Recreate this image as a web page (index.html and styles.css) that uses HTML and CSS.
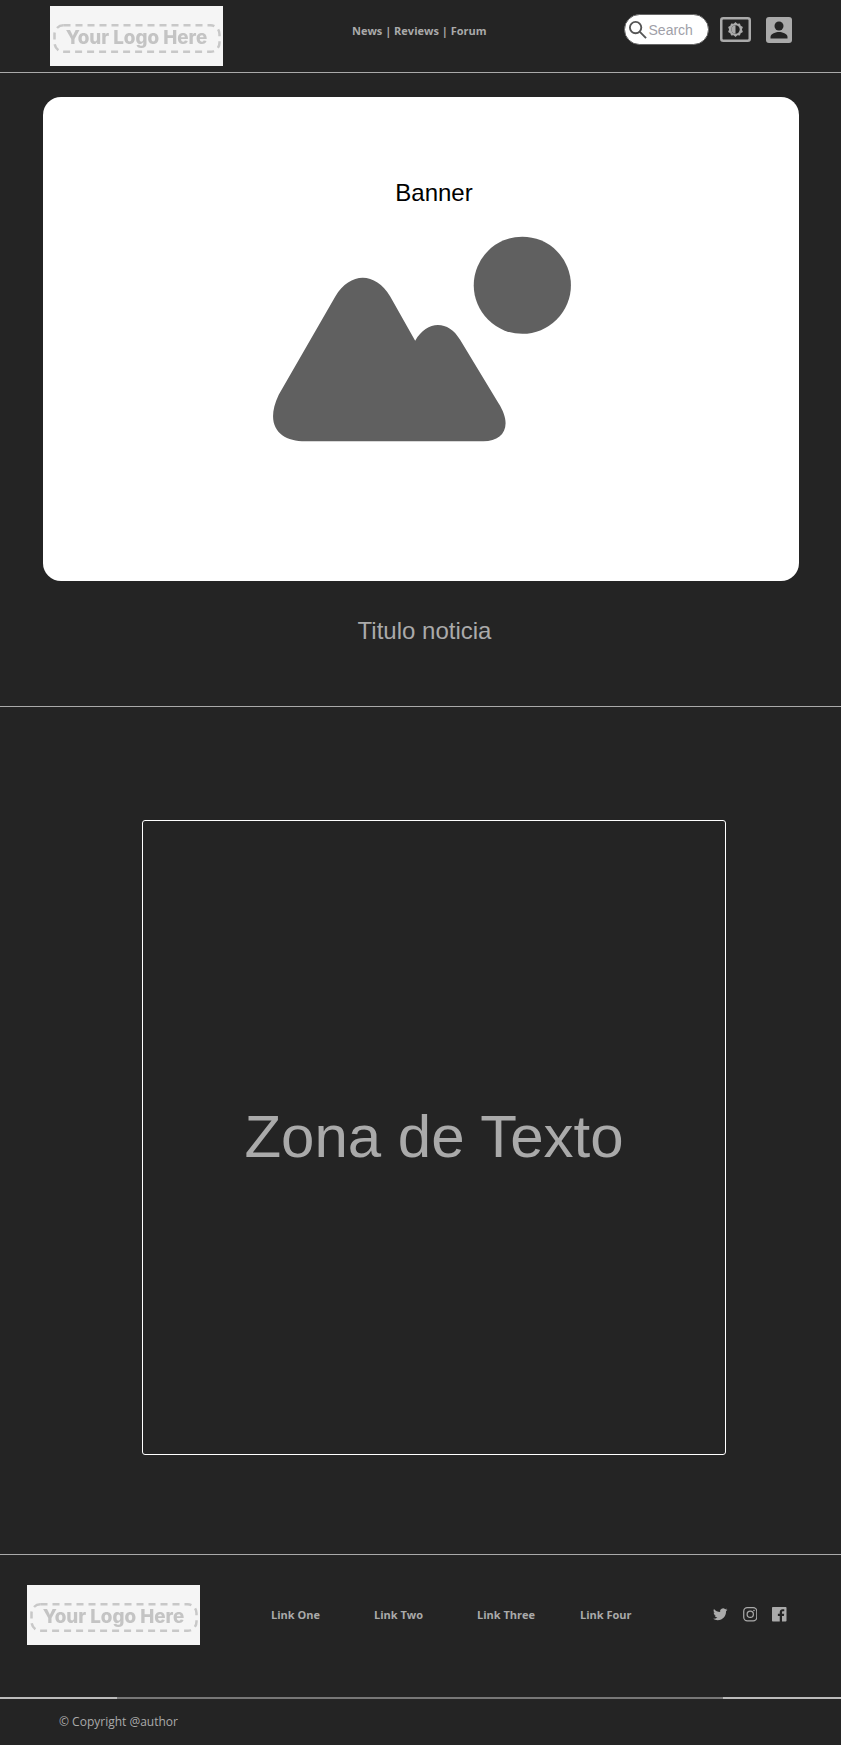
FILE: index.html
```html
<!DOCTYPE html>
<html>
  <head>
    <meta charset="utf-8" />
    <title>noticia</title>
    <link rel="stylesheet" href="styles.css">
  </head>
  <body>
    <header class="topbar">
      <div class="logo">
        <svg class="logo-dash" viewBox="0 0 173 60"><rect x="4.500" y="19.250" width="165" height="26.500" rx="9"/></svg>
        <span class="logo-text">Your Logo Here</span>
      </div>
      <nav class="topnav">
        <a href="#">News</a> | <a href="#">Reviews</a> | <a href="#">Forum</a>
      </nav>
      <div class="tools">
        <div class="search">
          <svg class="search-icon" viewBox="0 0 20 20"><circle cx="8" cy="8" r="6"/><path d="M12.500 12.500 19 19"/></svg>
          <span>Search</span>
        </div>
        <svg class="contrast" viewBox="0 0 31 25">
          <rect x="1.250" y="1.250" width="28.500" height="22.500" rx="2"/>
          <path class="gear" d="M15.500 5l1.900 1.700 2.500-.3.800 2.400 2.200 1.300-1 2.400 1 2.400-2.200 1.300-.8 2.400-2.500-.3-1.900 1.700-1.900-1.700-2.500.3-.8-2.400-2.200-1.300 1-2.400-1-2.400 2.200-1.300.8-2.400 2.500.3z"/>
          <circle class="gear-hole" cx="15.500" cy="12.500" r="4.200"/>
          <path class="gear" d="M15.500 8.300a4.200 4.200 0 0 0 0 8.400z"/>
        </svg>
        <svg class="profile" viewBox="0 0 26 26">
          <rect width="26" height="26" rx="3"/>
          <circle cx="13" cy="9" r="4.500"/>
          <path d="M4.500 21.500v-1.500c0-3.500 5.500-5 8.500-5s8.500 1.500 8.500 5v1.500z"/>
        </svg>
      </div>
    </header>

    <section class="hero">
      <div class="banner">
        <h2>Banner</h2>
        <svg class="picture" viewBox="60 225 905 625">
          <path d="M165 845C90 845 40 800 85 705L255 410C300 335 375 335 420 410L495 543C530 480 595 480 630 540L745 730C790 800 760 845 700 845Z"/>
          <circle cx="817" cy="376" r="146"/>
        </svg>
      </div>
      <h1>Titulo noticia</h1>
    </section>

    <main class="content">
      <div class="textzone">Zona de Texto</div>
    </main>

    <footer>
      <div class="footer-main">
        <div class="logo">
          <svg class="logo-dash" viewBox="0 0 173 60"><rect x="4.500" y="19.250" width="165" height="26.500" rx="9"/></svg>
          <span class="logo-text">Your Logo Here</span>
        </div>
        <div class="footer-links">
          <a href="#">Link One</a>
          <a href="#">Link Two</a>
          <a href="#">Link Three</a>
          <a href="#">Link Four</a>
        </div>
        <div class="social">
          <svg viewBox="0 0 24 24"><path d="M23.953 4.570a10 10 0 01-2.825.775 4.958 4.958 0 002.163-2.723c-.951.555-2.005.959-3.127 1.184a4.920 4.920 0 00-8.384 4.482C7.690 8.095 4.067 6.130 1.640 3.162a4.822 4.822 0 00-.666 2.475c0 1.710.870 3.213 2.188 4.096a4.904 4.904 0 01-2.228-.616v.060a4.923 4.923 0 003.946 4.827 4.996 4.996 0 01-2.212.085 4.936 4.936 0 004.604 3.417 9.867 9.867 0 01-6.102 2.105c-.390 0-.779-.023-1.170-.067a13.995 13.995 0 007.557 2.209c9.053 0 13.998-7.496 13.998-13.985 0-.210 0-.420-.015-.630A9.935 9.935 0 0024 4.590z"/></svg>
          <svg class="insta" viewBox="0 0 24 24"><rect x="1.200" y="1.200" width="21.600" height="21.600" rx="6"/><circle cx="12" cy="12" r="5.200"/><circle class="dot" cx="18.200" cy="5.800" r="1.300"/></svg>
          <svg viewBox="0 0 24 24"><path d="M22.675 0H1.325C.593 0 0 .593 0 1.325v21.351C0 23.407.593 24 1.325 24H12.820v-9.294H9.692v-3.622h3.128V8.413c0-3.100 1.893-4.788 4.659-4.788 1.325 0 2.463.099 2.795.143v3.240l-1.918.001c-1.504 0-1.795.715-1.795 1.763v2.313h3.587l-.467 3.622h-3.120V24h6.116c.730 0 1.323-.593 1.323-1.325V1.325C24 .593 23.407 0 22.675 0z"/></svg>
        </div>
      </div>
      <div class="copyright">© Copyright @author</div>
    </footer>
  </body>
</html>
```

FILE: styles.css
```css
html { font-family: "Liberation Sans", Arial, sans-serif; }

body {
  margin: 0;
  background-color: #242424;
  color: #aaa;
}

a {
  color: #aaa;
  text-decoration: none;
}

.topbar {
  display: flex;
  align-items: flex-start;
  box-sizing: border-box;
  height: 73px;
  padding: 6px 0 0 50px;
  border-bottom: 1px solid #aaa;
}

.logo {
  position: relative;
  display: flex;
  align-items: center;
  justify-content: center;
  flex: none;
  width: 173px;
  height: 60px;
  background-color: #f5f5f5;
}
.logo-dash {
  position: absolute;
  top: 0;
  left: 0;
  width: 173px;
  height: 60px;
  fill: none;
  stroke: #c8c8c8;
  stroke-width: 2.500;
  stroke-dasharray: 7 5;
}
.logo-text {
  margin-top: 3px;
  color: #c4c4c4;
  font-family: Inter, sans-serif;
  font-size: 18.800px;
  font-weight: 800;
  filter: blur(0.4px);
}

.topnav {
  margin: 17px 0 0 129px;
  font-family: "Open Sans", sans-serif;
  font-size: 11px;
  font-weight: bold;
  line-height: 16px;
}

.tools {
  display: flex;
  align-items: center;
  margin: 8px 0 0 137px;
}

.search {
  display: flex;
  align-items: center;
  box-sizing: border-box;
  width: 85px;
  height: 31px;
  padding-left: 3px;
  border: 1px solid #666;
  border-radius: 16px;
  background-color: #fff;
  color: #a0a0a8;
  font-size: 14px;
}
.search-icon {
  width: 19px;
  height: 19px;
  margin-right: 2px;
  fill: none;
  stroke: #555;
  stroke-width: 2;
}

.contrast {
  width: 31px;
  height: 25px;
  margin-left: 11px;
}
.contrast rect {
  fill: none;
  stroke: #aaa;
  stroke-width: 2.500;
}
.contrast .gear { fill: #aaa; }
.contrast .gear-hole { fill: #242424; }

.profile {
  width: 26px;
  height: 26px;
  margin-left: 15px;
}
.profile rect { fill: #aaa; }
.profile circle, .profile path { fill: #242424; }

.hero {
  height: 634px;
  padding-top: 24px;
  box-sizing: border-box;
  border-bottom: 1px solid #aaa;
}

.banner {
  display: flex;
  flex-direction: column;
  align-items: center;
  box-sizing: border-box;
  width: 756px;
  height: 484px;
  margin-left: 43px;
  padding-top: 80px;
  border-radius: 18px;
  background-color: #fff;
}
.banner h2 {
  margin: 0 0 0 26px;
  color: #000;
  font-size: 24px;
  font-weight: normal;
  line-height: 32px;
}
.picture {
  width: 302px;
  height: 208px;
  margin: 26px 0 0;
  fill: #606060;
}

.hero h1 {
  margin: 36px 0 0;
  padding-left: 8px;
  font-size: 24px;
  font-weight: normal;
  line-height: 28px;
  text-align: center;
}

.content {
  height: 848px;
  padding-top: 113px;
  box-sizing: border-box;
  border-bottom: 1px solid #aaa;
}

.textzone {
  display: flex;
  align-items: center;
  justify-content: center;
  box-sizing: border-box;
  width: 584px;
  height: 635px;
  margin-left: 142px;
  padding-bottom: 2px;
  border: 1px solid #fff;
  border-radius: 3px;
  font-size: 60px;
}

.footer-main {
  display: flex;
  align-items: flex-start;
  box-sizing: border-box;
  height: 144px;
  padding: 30px 0 0 27px;
  border-bottom: 2px solid #777;
  border-image: linear-gradient(to right, #bbb 118px, #777 118px, #777 722px, #bbb 722px) 1;
}

.footer-links {
  display: grid;
  grid-template-columns: repeat(4, 103px);
  margin: 22px 0 0 71px;
  font-family: "Open Sans", sans-serif;
  font-size: 11px;
  font-weight: bold;
  line-height: 16px;
}

.social {
  display: flex;
  gap: 15px;
  margin: 22px 0 0 30px;
}
.social svg {
  width: 14.500px;
  height: 14.500px;
  fill: #aaa;
}
.social .insta {
  fill: none;
  stroke: #aaa;
  stroke-width: 2;
}
.social .insta .dot {
  fill: #aaa;
  stroke: none;
}

.copyright {
  padding: 15px 0 0 59px;
  font-family: "Open Sans", sans-serif;
  font-size: 12px;
  line-height: 16px;
}
```
